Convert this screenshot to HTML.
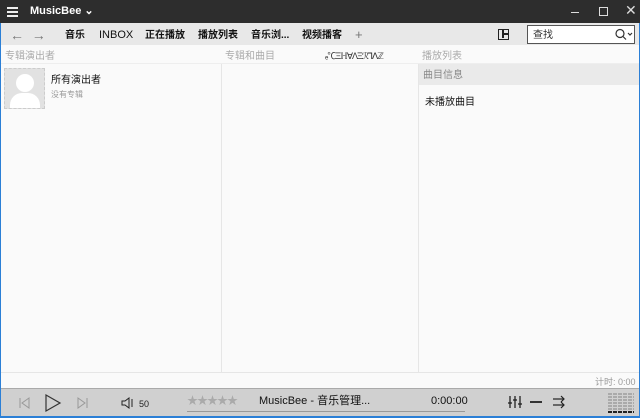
<!DOCTYPE html>
<html><head><meta charset="utf-8"><style>
*{margin:0;padding:0;box-sizing:border-box}
body{width:640px;height:418px;overflow:hidden;font-family:"Liberation Sans","Noto Sans CJK SC",sans-serif;background:#2b7fd6;position:relative}
.a{position:absolute}
.t{font-size:11px;white-space:nowrap;line-height:13px}
</style></head><body>
<div class="a" style="left:1px;top:0;width:638px;height:416px;background:#fafafa"></div>
<div class="a" style="left:0;top:0;width:640px;height:23px;background:#2d2d2d"></div>
<div class="a" style="left:7px;top:7px;width:11px;height:10px;border-top:2px solid #eee;border-bottom:2px solid #eee"><div style="margin-top:2px;height:2px;background:#eee"></div></div>
<div class="a t" style="left:30px;top:5px;color:#fff;font-weight:bold;font-size:11px">MusicBee ⌄</div>
<div class="a" style="left:571px;top:12px;width:8px;height:1px;background:#ddd"></div>
<div class="a" style="left:599px;top:7px;width:9px;height:9px;border:1px solid #ddd"></div>
<div class="a t" style="left:625px;top:4px;color:#ddd;font-size:14px">✕</div>
<div class="a" style="left:1px;top:23px;width:638px;height:22px;background:#e8e8e8"></div>
<div class="a t" style="left:10px;top:27px;color:#777;font-size:14px;line-height:16px">←&nbsp;&nbsp;→</div>
<div class="a t" style="left:65px;top:29px;color:#111;font-weight:bold;font-size:10px">音乐</div>
<div class="a t" style="left:99px;top:29px;color:#111;font-size:11px">INBOX</div>
<div class="a t" style="left:145px;top:29px;color:#111;font-weight:bold;font-size:10px">正在播放</div>
<div class="a t" style="left:198px;top:29px;color:#111;font-weight:bold;font-size:10px">播放列表</div>
<div class="a t" style="left:251px;top:29px;color:#111;font-weight:bold;font-size:10px">音乐浏...</div>
<div class="a t" style="left:302px;top:29px;color:#111;font-weight:bold;font-size:10px">视频播客</div>
<div class="a t" style="left:355px;top:28px;color:#777;font-size:13px">+</div>
<div class="a" style="left:498px;top:29px;width:11px;height:11px;border:1.5px solid #222"><div style="position:absolute;left:3px;top:0;width:1.5px;height:8px;background:#222"></div><div style="position:absolute;left:3px;top:3px;width:6px;height:1.5px;background:#222"></div></div>
<div class="a" style="left:527px;top:25px;width:108px;height:19px;background:#fff;border:1px solid #555"></div>
<div class="a t" style="left:533px;top:29px;color:#333;font-size:10px">查找</div>
<svg class="a" style="left:614px;top:28px" width="20" height="13"><circle cx="6" cy="5.5" r="4" fill="none" stroke="#333" stroke-width="1.2"/><line x1="9" y1="8.5" x2="12" y2="11.5" stroke="#333" stroke-width="1.2"/><path d="M14 5 L16 7 L18 5" fill="none" stroke="#333" stroke-width="1.2"/></svg>
<div class="a t" style="left:5px;top:50px;color:#aaa;font-size:10px">专辑演出者</div>
<div class="a t" style="left:225px;top:50px;color:#aaa;font-size:10px">专辑和曲目</div>
<div class="a t" style="left:325px;top:50px;color:#333;font-size:9px;letter-spacing:-1px">ₑ℃ΞℍⱯΛΞℛ⅂ᐱℤ</div>
<div class="a t" style="left:422px;top:50px;color:#aaa;font-size:10px">播放列表</div>
<div class="a" style="left:1px;top:63px;width:638px;height:1px;background:#eee"></div>
<div class="a" style="left:221px;top:64px;width:1px;height:308px;background:#e6e6e6"></div>
<div class="a" style="left:418px;top:64px;width:1px;height:308px;background:#e6e6e6"></div>
<div class="a" style="left:419px;top:64px;width:220px;height:21px;background:#eaeaea"></div>
<div class="a t" style="left:423px;top:69px;color:#888;font-size:10px">曲目信息</div>
<div class="a t" style="left:425px;top:96px;color:#111;font-size:10px">未播放曲目</div>
<div class="a" style="left:4px;top:68px;width:41px;height:41px;background:#e2e2e2;border:1px dashed #ccc;overflow:hidden">
<div style="position:absolute;left:11px;top:5px;width:18px;height:18px;border-radius:50%;background:#fff"></div>
<div style="position:absolute;left:5px;top:24px;width:30px;height:20px;border-radius:12px 12px 0 0;background:#fff"></div></div>
<div class="a t" style="left:51px;top:74px;color:#111;font-size:10px">所有演出者</div>
<div class="a t" style="left:51px;top:88px;color:#999;font-size:8px">没有专辑</div>
<div class="a" style="left:1px;top:372px;width:638px;height:1px;background:#e6e6e6"></div>
<div class="a t" style="left:595px;top:376px;color:#999;font-size:9px">计时: 0:00</div>
<div class="a" style="left:1px;top:388px;width:638px;height:28px;background:#d0d0d0;border-top:1px solid #aaa"></div>
<svg class="a" style="left:18px;top:396px" width="14" height="14"><line x1="2" y1="2" x2="2" y2="12" stroke="#999"/><path d="M11 2 L4 7 L11 12 Z" fill="none" stroke="#999"/></svg>
<svg class="a" style="left:44px;top:393px" width="18" height="20"><path d="M2 2 L16 10 L2 18 Z" fill="none" stroke="#333" stroke-width="1.2"/></svg>
<svg class="a" style="left:75px;top:396px" width="14" height="14"><line x1="12" y1="2" x2="12" y2="12" stroke="#999"/><path d="M3 2 L10 7 L3 12 Z" fill="none" stroke="#999"/></svg>
<svg class="a" style="left:120px;top:396px" width="14" height="14"><path d="M2 5 L5 5 L9 2 L9 12 L5 9 L2 9Z" fill="none" stroke="#222"/><line x1="12" y1="3" x2="12" y2="11" stroke="#222"/></svg>
<div class="a t" style="left:139px;top:398px;color:#222;font-size:9px">50</div>
<div class="a t" style="left:187px;top:395px;color:#aaa;font-size:11px;letter-spacing:-1px">★★★★★</div>
<div class="a t" style="left:259px;top:395px;color:#111">MusicBee - 音乐管理...</div>
<div class="a t" style="left:431px;top:395px;color:#111">0:00:00</div>
<div class="a" style="left:187px;top:411px;width:278px;height:1px;background:#999"></div>
<svg class="a" style="left:508px;top:395px" width="14" height="14"><g stroke="#222" stroke-width="1.3"><line x1="2" y1="1" x2="2" y2="13"/><line x1="7" y1="1" x2="7" y2="13"/><line x1="12" y1="1" x2="12" y2="13"/><line x1="0" y1="8" x2="4" y2="8"/><line x1="5" y1="5" x2="9" y2="5"/><line x1="10" y1="9" x2="14" y2="9"/></g></svg>
<div class="a" style="left:530px;top:401px;width:12px;height:1.5px;background:#333"></div>
<svg class="a" style="left:552px;top:395px" width="14" height="14"><g stroke="#222" stroke-width="1.2" fill="none"><line x1="1" y1="4" x2="12" y2="4"/><line x1="1" y1="10" x2="12" y2="10"/><path d="M9 1 L12 4 L9 7"/><path d="M9 7 L12 10 L9 13"/></g></svg>
<div class="a" style="left:608px;top:393px;width:26px;height:20px;background:repeating-linear-gradient(90deg,#aaa 0 4px,transparent 4px 5px);-webkit-mask:repeating-linear-gradient(180deg,#000 0 2px,transparent 2px 3px)"></div>
<div class="a" style="left:608px;top:411px;width:26px;height:2px;background:repeating-linear-gradient(90deg,#222 0 4px,transparent 4px 5px)"></div>
</body></html>
